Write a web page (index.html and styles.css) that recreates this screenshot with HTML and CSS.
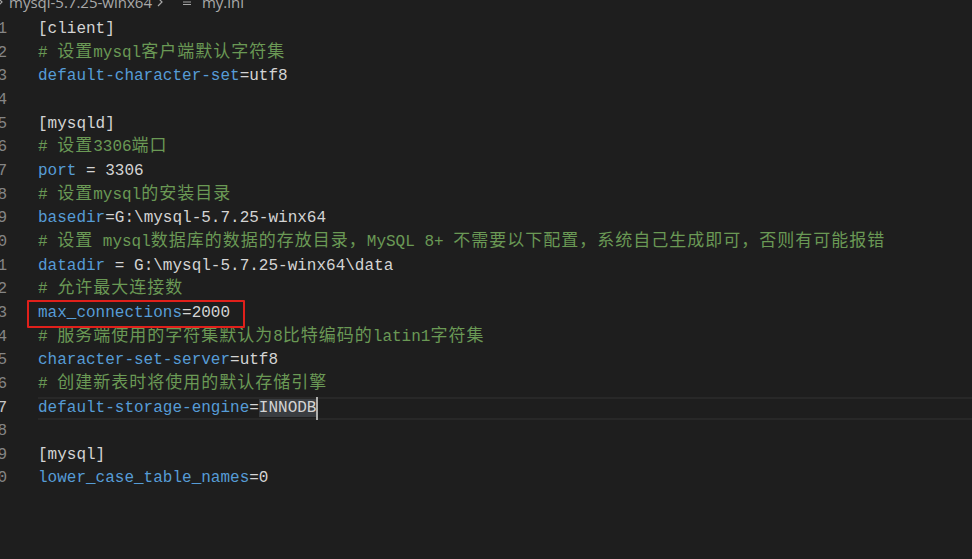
FILE: index.html
```html
<!DOCTYPE html>
<html lang="zh">
<head>
<meta charset="utf-8">
<title>my.ini</title>
<link rel="stylesheet" href="styles.css">
</head>
<body>
<div class="crumbs">
  <svg class="chev chev-first" width="8" height="12" viewBox="0 0 8 12"><path d="M2 2l4 4-4 4" fill="none" stroke="#a6a6a6" stroke-width="1.2"/></svg>
  <span class="crumb">mysql-5.7.25-winx64</span>
  <svg class="chev" width="8" height="12" viewBox="0 0 8 12"><path d="M2 2l4 4-4 4" fill="none" stroke="#a6a6a6" stroke-width="1.2"/></svg>
  <svg class="menu" width="10" height="10" viewBox="0 0 10 10"><path d="M1 2.5h8M1 5h8M1 7.5h8" stroke="#a6a6a6" stroke-width="1.1"/></svg>
  <span class="crumb">my.ini</span>
</div>
<div class="editor">
  <div class="line"><span class="ln">1</span><span class="code"><span class="sec">[client]</span></span></div>
  <div class="line"><span class="ln">2</span><span class="code cmt"># <span class="zh">设置</span>mysql<span class="zh">客户端默认字符集</span></span></div>
  <div class="line"><span class="ln">3</span><span class="code"><span class="key">default-character-set</span>=utf8</span></div>
  <div class="line"><span class="ln">4</span><span class="code"></span></div>
  <div class="line"><span class="ln">5</span><span class="code"><span class="sec">[mysqld]</span></span></div>
  <div class="line"><span class="ln">6</span><span class="code cmt"># <span class="zh">设置</span>3306<span class="zh">端口</span></span></div>
  <div class="line"><span class="ln">7</span><span class="code"><span class="key">port</span> = 3306</span></div>
  <div class="line"><span class="ln">8</span><span class="code cmt"># <span class="zh">设置</span>mysql<span class="zh">的安装目录</span></span></div>
  <div class="line"><span class="ln">9</span><span class="code"><span class="key">basedir</span>=G:\mysql-5.7.25-winx64</span></div>
  <div class="line"><span class="ln">10</span><span class="code cmt"># <span class="zh">设置</span> mysql<span class="zh">数据库的数据的存放目录，</span>MySQL 8+ <span class="zh">不需要以下配置，系统自己生成即可，否则有可能报错</span></span></div>
  <div class="line"><span class="ln">11</span><span class="code"><span class="key">datadir</span> = G:\mysql-5.7.25-winx64\data</span></div>
  <div class="line"><span class="ln">12</span><span class="code cmt"># <span class="zh">允许最大连接数</span></span></div>
  <div class="line"><span class="ln">13</span><span class="code"><span class="mark"><span class="key">max_connections</span>=2000</span></span></div>
  <div class="line"><span class="ln">14</span><span class="code cmt"># <span class="zh">服务端使用的字符集默认为</span>8<span class="zh">比特编码的</span>latin1<span class="zh">字符集</span></span></div>
  <div class="line"><span class="ln">15</span><span class="code"><span class="key">character-set-server</span>=utf8</span></div>
  <div class="line"><span class="ln">16</span><span class="code cmt"># <span class="zh">创建新表时将使用的默认存储引擎</span></span></div>
  <div class="line current"><span class="ln">17</span><span class="code"><span class="key">default-storage-engine</span>=<span class="word">INNODB</span><span class="cursor"></span></span></div>
  <div class="line"><span class="ln">18</span><span class="code"></span></div>
  <div class="line"><span class="ln">19</span><span class="code"><span class="sec">[mysql]</span></span></div>
  <div class="line"><span class="ln">20</span><span class="code"><span class="key">lower_case_table_names</span>=0</span></div>
</div>
</body>
</html>
```
FILE: styles.css
```css
html, body {
  margin: 0;
  padding: 0;
  background: #1e1e1e;
  overflow: hidden;
  width: 972px;
  height: 559px;
}

.crumbs {
  display: flex;
  align-items: center;
  height: 22px;
  margin-top: -9px;
  font-family: "Open Sans", "Noto Sans", sans-serif;
  font-size: 15px;
  line-height: 22px;
  color: #a9a9a9;
  white-space: nowrap;
}

.chev {
  flex: none;
  margin: 0 4px 0 4px;
}

.chev-first {
  margin-left: -4px;
  margin-right: 5px;
}

.menu {
  flex: none;
  margin: 0 10px 0 14px;
}

.editor {
  padding-top: 5px;
  font-family: "Liberation Mono", "Noto Sans CJK SC", monospace;
  font-size: 16px;
  color: #d4d4d4;
}

.line {
  display: flex;
  height: 23.66px;
  line-height: 23.66px;
  white-space: pre;
}

.ln {
  flex: none;
  width: 7px;
  display: flex;
  justify-content: flex-end;
  overflow: hidden;
  color: #858585;
}

.code {
  flex: 1;
  margin-left: 31px;
}

.current .ln {
  color: #c6c6c6;
}

.current .code {
  box-shadow: inset 0 2px 0 #282828, inset 0 -2px 0 #282828;
}

.sec {
  color: #d4d4d4;
}

.key {
  color: #569cd6;
}

.cmt {
  color: #6a9955;
}

.zh {
  font-family: "Noto Sans CJK SC", sans-serif;
  font-size: 17px;
  line-height: 16px;
  letter-spacing: 1px;
}

.word {
  background: #3a3d41;
}

.cursor {
  display: inline-block;
  width: 2px;
  height: 23.66px;
  vertical-align: top;
  background: #aeafad;
}

.mark {
  position: relative;
  display: inline-block;
}

.mark::after {
  content: "";
  position: absolute;
  top: -2px;
  bottom: -2px;
  left: -11px;
  right: -15px;
  border: 2px solid #e0201b;
  border-radius: 1px;
}
```
